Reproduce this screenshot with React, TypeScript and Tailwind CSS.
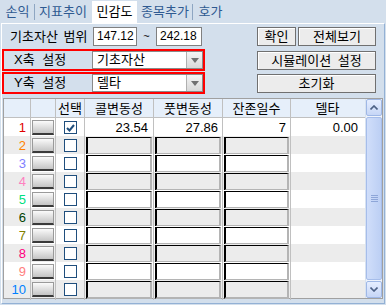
import React from 'react'

const FONT = { fontFamily: '"Liberation Sans", "Noto Sans CJK KR", sans-serif' }

const rowColors = ['#e00000', '#ff8000', '#8080ff', '#ff80c0', '#00e080', '#004000', '#808000', '#ff0080', '#ff8080', '#0080ff']

function Btn({ label, w }: { label: string; w: string }) {
  return (
    <div className={`${w} h-[19px] flex items-center justify-center border border-[#707070] bg-[#ececec] shadow-[inset_1px_1px_0_#fff] text-[13px] leading-none text-black [word-spacing:3px]`}>
      {label}
    </div>
  )
}

function Select({ value }: { value: string }) {
  return (
    <div className="w-[111px] h-[18px] flex bg-white border border-[#8a8a8a]">
      <span className="flex-1 pl-[4px] text-[13px] leading-[16px]">{value}</span>
      <span className="w-[16px] h-full flex items-center justify-center bg-gradient-to-b from-[#f4f4f4] to-[#d8d8d8] border-l border-[#b0b0b0]">
        <svg width="8" height="5" viewBox="0 0 8 5"><path d="M0 0h8L4 5z" fill="#707070" /></svg>
      </span>
    </div>
  )
}

function AxisRow({ label, value }: { label: string; value: string }) {
  return (
    <div className="w-[203px] h-[22px] border-2 border-[#ff0000] flex items-center">
      <span className="w-[88px] pl-[10px] text-[13px] [word-spacing:4px]">{label}</span>
      <Select value={value} />
    </div>
  )
}

export default function App() {
  const tabs = [
    { label: '손익', w: 'w-[33px]' },
    { label: '지표추이', w: 'w-[56px]' },
    { label: '민감도', w: 'w-[45px]', active: true },
    { label: '종목추가', w: 'w-[54px]' },
    { label: '호가', w: 'w-[35px]' },
  ]

  return (
    <div className="w-[386px] h-[305px] bg-[#d3dfec] overflow-hidden text-black" style={FONT}>
      {/* 탭 */}
      <div className="h-[23px] flex items-end pl-[1px]">
        {tabs.map((t, i) => (
          <React.Fragment key={t.label}>
            <div className={`${t.w} h-[22px] flex items-center justify-center text-[13px] ${t.active ? 'bg-white text-black' : 'text-[#2f5a91]'}`}>
              {t.label}
            </div>
            {i < tabs.length - 1 && !t.active && !tabs[i + 1].active && (
              <div className="w-[1px] h-[16px] mb-[3px] bg-[#8ea6c2]" />
            )}
            {(t.active || (i < tabs.length - 1 && tabs[i + 1].active)) && <div className="w-[1px]" />}
          </React.Fragment>
        ))}
      </div>

      <div className="ml-[1px] w-[384px] h-[281px] border border-[#93b1d5] border-t-white border-l-white flex flex-col pt-[3px]">
        {/* 기초자산 범위 */}
        <div className="h-[19px] flex items-center pr-[8px]">
          <span className="w-[91px] pl-[8px] text-[13px] [word-spacing:2px]">기초자산 범위</span>
          <div className="w-[44px] h-[19px] bg-white border border-[#808080] pl-[3px] text-[12px] leading-[17px]">147.12</div>
          <span className="w-[19px] text-center text-[11px]">~</span>
          <div className="w-[46px] h-[19px] bg-white border border-[#808080] pl-[3px] text-[12px] leading-[17px]">242.18</div>
          <div className="ml-auto flex gap-[2px]">
            <Btn label="확인" w="w-[39px]" />
            <Btn label="전체보기" w="w-[78px]" />
          </div>
        </div>

        <div className="mt-[3px] flex items-center pr-[8px]">
          <AxisRow label="X축 설정" value="기초자산" />
          <div className="ml-auto"><Btn label="시뮬레이션 설정" w="w-[119px]" /></div>
        </div>

        <div className="mt-[1px] flex items-center pr-[8px]">
          <AxisRow label="Y축 설정" value="델타" />
          <div className="ml-auto"><Btn label="초기화" w="w-[119px]" /></div>
        </div>

        {/* 그리드 */}
        <div className="mt-[4px] ml-[1px] w-[380px] h-[201px] border border-[#a0a0a0] bg-white flex">
          <div className="w-[361px] flex flex-col">
            <div className="h-[19px] grid grid-cols-[27px_25px_29px_69px_69px_68px_73px] bg-[#e6effa] border-b border-[#c0c0c0] text-[13px]">
              <div className="border-r border-[#c0c0c0]" />
              <div className="border-r border-[#c0c0c0]" />
              <div className="border-r border-[#c0c0c0] flex items-center justify-center">선택</div>
              <div className="border-r border-[#c0c0c0] flex items-center justify-center">콜변동성</div>
              <div className="border-r border-[#c0c0c0] flex items-center justify-center">풋변동성</div>
              <div className="border-r border-[#c0c0c0] flex items-center justify-center">잔존일수</div>
              <div className="flex items-center justify-center">델타</div>
            </div>
            {rowColors.map((c, i) => {
              const n = i + 1
              const bg = n % 2 === 0 ? 'bg-[#ececec]' : 'bg-white'
              return (
                <div key={n} className={`h-[18px] grid grid-cols-[27px_25px_29px_69px_69px_68px_73px] ${bg} text-[12px]`}>
                  <div className="border-r border-[#c0c0c0] flex items-center justify-end pr-[4px] text-[13px]" style={{ color: c }}>{n}</div>
                  <div className="border-r border-[#c0c0c0] flex items-center pl-[1px]">
                    <div className="w-[22px] h-[15px] bg-gradient-to-b from-[#fbfbfb] to-[#c4c4c4] border border-[#9a9a9a] border-b-2 border-b-[#3a3a3a]" />
                  </div>
                  <div className="border-r border-[#c0c0c0] flex items-center justify-center">
                    <div className="w-[13px] h-[13px] border-[1.5px] border-[#1f4e7d] bg-white flex items-center justify-center">
                      {n === 1 && (
                        <svg width="9" height="8" viewBox="0 0 9 8"><path d="M1 4l2.5 2.5L8 1" stroke="#1f4e7d" strokeWidth="2" fill="none" /></svg>
                      )}
                    </div>
                  </div>
                  {n === 1 ? (
                    <>
                      <div className="border-r border-[#c0c0c0] flex items-center justify-end pr-[5px] text-[13px]">23.54</div>
                      <div className="border-r border-[#c0c0c0] flex items-center justify-end pr-[4px] text-[13px]">27.86</div>
                      <div className="border-r border-[#c0c0c0] flex items-center justify-end pr-[4px] text-[13px]">7</div>
                      <div className="flex items-center justify-end pr-[6px] text-[13px]">0.00</div>
                    </>
                  ) : (
                    <>
                      {[0, 1, 2].map(k => (
                        <div key={k} className="border-r border-[#c0c0c0] p-[1px]">
                          <div className="h-full border-t border-l-2 border-black border-r-2 border-r-[#b4b4b4] border-b-2 border-b-[#b4b4b4]" />
                        </div>
                      ))}
                      <div />
                    </>
                  )}
                </div>
              )
            })}
          </div>
          {/* 스크롤바 */}
          <div className="w-[17px] flex flex-col bg-[#eef3fb] border-l border-[#d8e2f0]">
            <div className="h-[17px] rounded-[2px] border border-[#9fb8e6] bg-gradient-to-b from-[#e6eeff] to-[#c6d6f6] flex items-center justify-center">
              <svg width="8" height="5" viewBox="0 0 8 5"><path d="M0.5 4.5L4 1l3.5 3.5" stroke="#4d6185" strokeWidth="1.6" fill="none" /></svg>
            </div>
            <div className="flex-1 my-[1px] rounded-[2px] border border-[#a6bdea] bg-gradient-to-r from-[#d0defa] to-[#bccff4] flex items-center justify-center">
              <div className="flex flex-col gap-[1px]">
                <div className="w-[7px] h-[1px] bg-[#8ea6d8]" />
                <div className="w-[7px] h-[1px] bg-[#8ea6d8]" />
                <div className="w-[7px] h-[1px] bg-[#8ea6d8]" />
                <div className="w-[7px] h-[1px] bg-[#8ea6d8]" />
              </div>
            </div>
            <div className="h-[17px] rounded-[2px] border border-[#9fb8e6] bg-gradient-to-b from-[#e6eeff] to-[#c6d6f6] flex items-center justify-center">
              <svg width="8" height="5" viewBox="0 0 8 5"><path d="M0.5 0.5L4 4l3.5-3.5" stroke="#4d6185" strokeWidth="1.6" fill="none" /></svg>
            </div>
          </div>
        </div>
      </div>
    </div>
  )
}
